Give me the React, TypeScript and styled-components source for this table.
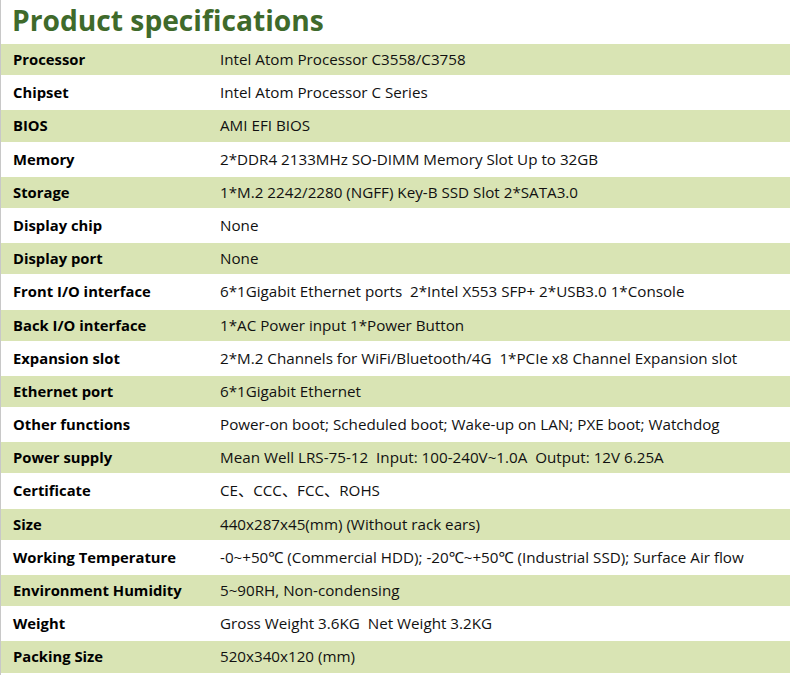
import React from "react";
import { styled, createGlobalStyle } from "styled-components";

const specs: [string, string][] = [
  ["Processor", "Intel Atom Processor C3558/C3758"],
  ["Chipset", "Intel Atom Processor C Series"],
  ["BIOS", "AMI EFI BIOS"],
  ["Memory", "2*DDR4 2133MHz SO-DIMM Memory Slot Up to 32GB"],
  ["Storage", "1*M.2 2242/2280 (NGFF) Key-B SSD Slot 2*SATA3.0"],
  ["Display chip", "None"],
  ["Display port", "None"],
  ["Front I/O interface", "6*1Gigabit Ethernet ports  2*Intel X553 SFP+ 2*USB3.0 1*Console"],
  ["Back I/O interface", "1*AC Power input 1*Power Button"],
  ["Expansion slot", "2*M.2 Channels for WiFi/Bluetooth/4G  1*PCIe x8 Channel Expansion slot"],
  ["Ethernet port", "6*1Gigabit Ethernet"],
  ["Other functions", "Power-on boot; Scheduled boot; Wake-up on LAN; PXE boot; Watchdog"],
  ["Power supply", "Mean Well LRS-75-12  Input: 100-240V~1.0A  Output: 12V 6.25A"],
  ["Certificate", "CE、CCC、FCC、ROHS"],
  ["Size", "440x287x45(mm) (Without rack ears)"],
  ["Working Temperature", "-0~+50℃ (Commercial HDD); -20℃~+50℃ (Industrial SSD); Surface Air flow"],
  ["Environment Humidity", "5~90RH, Non-condensing"],
  ["Weight", "Gross Weight 3.6KG  Net Weight 3.2KG"],
  ["Packing Size", "520x340x120 (mm)"],
];

const App = () => {
  return (
    <>
      <GlobalStyle />
      <Page>
        <Title>Product specifications</Title>
        <Table>
          {specs.map(([label, value], i) => (
            <Row key={label} $shaded={i % 2 === 0}>
              <Label>{label}</Label>
              <Value>{value}</Value>
            </Row>
          ))}
        </Table>
      </Page>
    </>
  );
};

export default App;

const GlobalStyle = createGlobalStyle`
  body {
    margin: 0;
    background: #fff;
    font-family: "Open Sans", "Noto Sans", "Noto Sans CJK SC", sans-serif;
    color: #111;
  }
`;

const Page = styled.div`
  width: 790px;
  height: 675px;
  overflow: hidden;
  border-left: 1px solid #c8c8c8;
  box-sizing: border-box;
`;

const Title = styled.h1`
  margin: 0;
  height: 43px;
  padding-left: 11px;
  font-size: 28.2px;
  line-height: 40px;
  font-weight: 700;
  color: #3f6a2b;
`;

const Table = styled.div`
  display: flex;
  flex-direction: column;
`;

const Row = styled.div<{ $shaded: boolean }>`
  display: flex;
  align-items: baseline;
  box-sizing: border-box;
  height: 33.2px;
  padding-top: 5px;
  border-top: 1px solid #fff;
  border-bottom: 1px solid #fff;
  background: ${(p) => (p.$shaded ? "#d9e4b4" : "#fff")};
  background-clip: padding-box;
  font-size: 15.2px;
  line-height: 20px;
  white-space: pre;
`;

const Label = styled.div`
  width: 219px;
  flex-shrink: 0;
  box-sizing: border-box;
  padding-left: 12px;
  font-size: 14.8px;
  font-weight: 700;
  color: #000;
`;

const Value = styled.div``;
